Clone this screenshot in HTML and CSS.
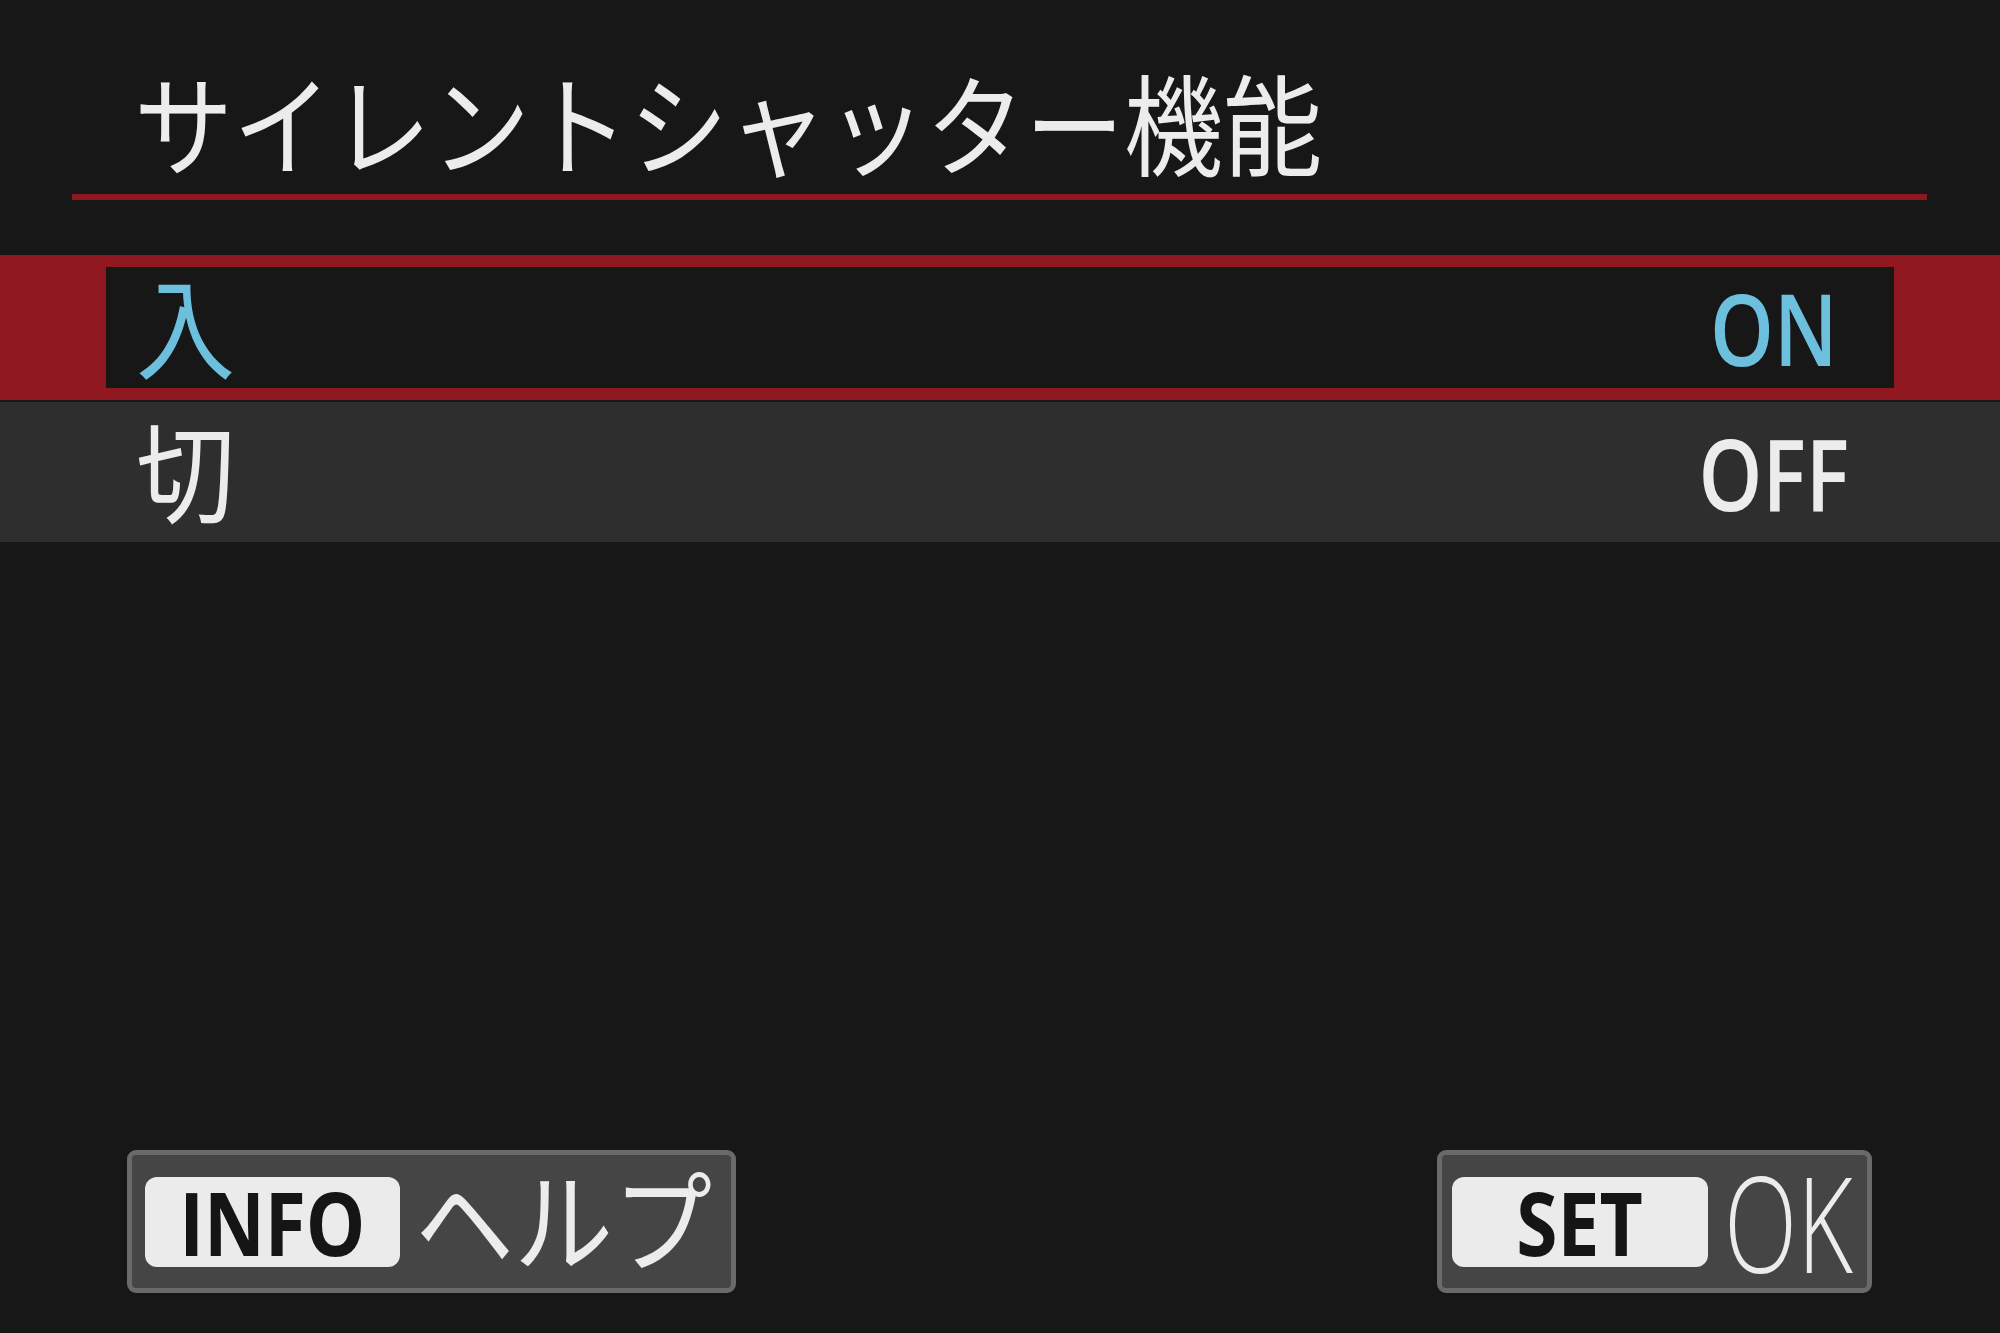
FILE: index.html
```html
<!DOCTYPE html>
<html lang="ja">
<head>
<meta charset="utf-8">
<title>サイレントシャッター機能</title>
<link rel="stylesheet" href="styles.css">
</head>
<body>
<div class="screen">
  <header class="header">
    <h1 class="title"><span class="cond">サイレントシャッター機能</span></h1>
    <div class="rule"></div>
  </header>

  <div class="options">
    <div class="row selected">
      <div class="inner">
        <span class="label"><span class="cond">入</span></span>
        <span class="value"><span class="vtext">ON</span></span>
      </div>
    </div>
    <div class="row plain">
      <span class="label"><span class="cond">切</span></span>
      <span class="value"><span class="vtext">OFF</span></span>
    </div>
  </div>

  <div class="spacer"></div>

  <footer class="footer">
    <div class="btn btn-info">
      <span class="key"><span class="keytext">INFO</span></span>
      <span class="btn-label"><span class="cond help">ヘルプ</span></span>
    </div>
    <div class="btn btn-set">
      <span class="key"><span class="keytext">SET</span></span>
      <span class="btn-ok">OK</span>
    </div>
  </footer>
</div>
</body>
</html>
```

FILE: styles.css
```css
html, body {
  margin: 0;
  padding: 0;
  background: #171717;
}

body {
  font-family: "Noto Sans CJK JP", "Noto Sans", sans-serif;
  color: #ececec;
}

.screen {
  width: 2000px;
  height: 1333px;
  display: flex;
  flex-direction: column;
  overflow: hidden;
}

.cond {
  display: inline-block;
  transform: scaleX(0.9);
  transform-origin: left center;
  white-space: nowrap;
}

/* header */
.header {
  padding-top: 65px;
}

.title {
  margin: 0 0 19px 0;
  padding-left: 134px;
  font-size: 110px;
  line-height: 110px;
  height: 110px;
  font-weight: 400;
  color: #ececec;
}

.rule {
  margin: 0 73px 0 72px;
  height: 6px;
  background: #8e1720;
}

/* options */
.options {
  margin-top: 55px;
  display: flex;
  flex-direction: column;
  gap: 2px;
}

.row {
  display: flex;
  align-items: center;
}

.selected {
  background: #8e1720;
  padding: 12px 106px;
  height: 145px;
  box-sizing: border-box;
}

.inner {
  flex: 1;
  height: 121px;
  background: #171717;
  display: flex;
  align-items: center;
  padding-left: 30px;
}

.plain {
  background: #2e2e2e;
  height: 140px;
  padding: 0 106px 0 136px;
}

.label {
  flex: 1;
  font-size: 110px;
  line-height: 110px;
  height: 110px;
}

.selected .label {
  color: #6cc0de;
  margin-top: -10px;
}

.plain .label {
  color: #ececec;
  margin-top: -10px;
}

.value {
  width: 240px;
  flex-shrink: 0;
  text-align: center;
  font-family: "Open Sans", "Noto Sans", sans-serif;
  font-weight: 600;
  font-size: 99px;
  line-height: 99px;
}

.vtext {
  display: inline-block;
  transform: scaleX(0.82);
  transform-origin: center center;
}

.selected .value {
  color: #6cc0de;
}

.plain .value {
  color: #ececec;
}

.spacer {
  flex: 1;
}

/* footer */
.footer {
  display: flex;
  justify-content: space-between;
  padding: 0 128px 0 127px;
  margin-bottom: 40px;
}

.btn {
  height: 143px;
  box-sizing: border-box;
  border: 5px solid #6a6a6a;
  border-radius: 9px;
  background: #454545;
  display: flex;
  align-items: center;
  padding-left: 13px;
}

.btn-info {
  width: 609px;
}

.btn-set {
  width: 435px;
  padding-left: 10px;
}

.key {
  flex-shrink: 0;
  height: 90px;
  background: #ebebeb;
  border-radius: 12px;
  display: flex;
  align-items: center;
  justify-content: center;
  font-family: "Open Sans", "Noto Sans", sans-serif;
  font-weight: 700;
  font-size: 87px;
  line-height: 90px;
  color: #151515;
}

.btn-info .key {
  width: 255px;
}

.btn-set .key {
  width: 256px;
}

.keytext {
  display: inline-block;
  transform: scaleX(0.86);
  transform-origin: center center;
}

.btn-label {
  flex-shrink: 0;
  margin-left: 15px;
  font-size: 110px;
  line-height: 110px;
  height: 110px;
  margin-top: -12px;
  color: #ececec;
}

.help {
  margin-right: -33px;
}

.btn-ok {
  flex-shrink: 0;
  margin-left: 16px;
  margin-right: -50px;
  font-family: "Open Sans", "Noto Sans", sans-serif;
  font-weight: 300;
  font-size: 133px;
  line-height: 133px;
  color: #ececec;
  display: inline-block;
  transform: scaleX(0.72);
  transform-origin: left center;
}
```
